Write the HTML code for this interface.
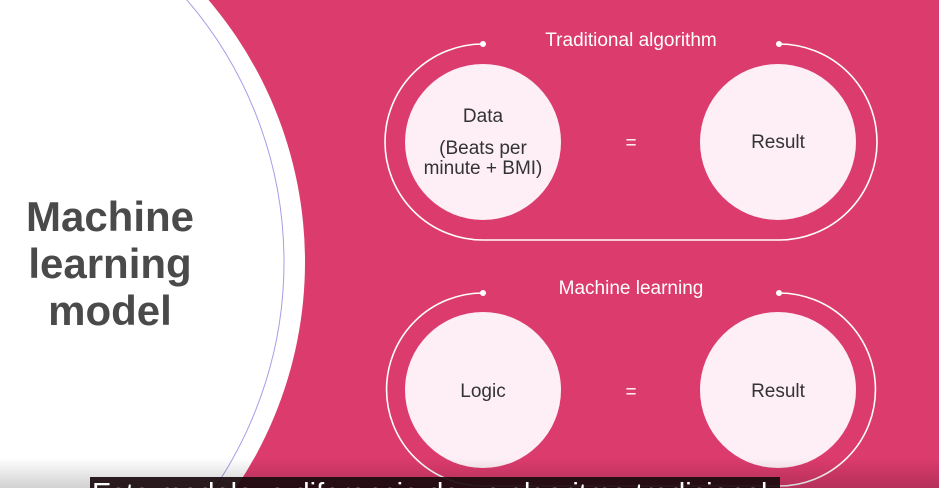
<!DOCTYPE html>
<html><head><meta charset="utf-8"><style>
html,body{margin:0;padding:0;width:939px;height:488px;overflow:hidden;background:#dc3b6e;position:relative}
svg{display:block}
text{font-family:"Liberation Sans",sans-serif}
#sub{position:absolute;left:90px;top:477px;width:690px;height:11px;overflow:hidden;background:rgba(26,10,14,0.92)}
#sub span{position:absolute;left:2px;top:3px;font:29px/1 "Liberation Sans",sans-serif;color:#fff;white-space:nowrap}
</style></head><body>
<svg width="939" height="488" viewBox="0 0 939 488" xmlns="http://www.w3.org/2000/svg">
<defs>
<linearGradient id="fade" x1="0" y1="0" x2="0" y2="1">
<stop offset="0" stop-color="#000" stop-opacity="0"/>
<stop offset="1" stop-color="#000" stop-opacity="0.18"/>
</linearGradient>
</defs>
<rect width="939" height="488" fill="#dc3b6e"/>
<circle cx="-99" cy="262" r="404" fill="#fff"/>
<circle cx="-118" cy="262" r="402" fill="none" stroke="#a99be8" stroke-width="1"/>
<text x="110" y="231" text-anchor="middle" font-size="42" font-weight="bold" fill="#4a4a4a">Machine</text>
<text x="110" y="278" text-anchor="middle" font-size="42" font-weight="bold" fill="#4a4a4a">learning</text>
<text x="110" y="325" text-anchor="middle" font-size="42" font-weight="bold" fill="#4a4a4a">model</text>

<text x="631" y="46" text-anchor="middle" font-size="19" fill="#fff">Traditional algorithm</text>
<path d="M483 44 A98 98 0 0 0 483 240 L779 240 A98 98 0 0 0 779 44" fill="none" stroke="#fff" stroke-width="1.6"/>
<circle cx="483" cy="44" r="3" fill="#fff"/><circle cx="779" cy="44" r="3" fill="#fff"/>
<circle cx="483" cy="142" r="78" fill="#fdeff5"/>
<circle cx="778" cy="142" r="78" fill="#fdeff5"/>
<text x="483" y="122" text-anchor="middle" font-size="19" fill="#333">Data</text>
<text x="483" y="154" text-anchor="middle" font-size="19" fill="#333">(Beats per</text>
<text x="483" y="174" text-anchor="middle" font-size="19" fill="#333">minute + BMI)</text>
<text x="778" y="148" text-anchor="middle" font-size="19" fill="#333">Result</text>
<text x="631" y="149" text-anchor="middle" font-size="19" fill="#fff">=</text>

<text x="631" y="294" text-anchor="middle" font-size="19" fill="#fff">Machine learning</text>
<path d="M483 293 A96.5 96.5 0 0 0 483 486 L779 486 A96.5 96.5 0 0 0 779 293" fill="none" stroke="#fff" stroke-width="1.6"/>
<circle cx="483" cy="293" r="3" fill="#fff"/><circle cx="779" cy="293" r="3" fill="#fff"/>
<circle cx="483" cy="390" r="78" fill="#fdeff5"/>
<circle cx="778" cy="390" r="78" fill="#fdeff5"/>
<text x="483" y="397" text-anchor="middle" font-size="19" fill="#333">Logic</text>
<text x="778" y="397" text-anchor="middle" font-size="19" fill="#333">Result</text>
<text x="631" y="398" text-anchor="middle" font-size="19" fill="#fff">=</text>

<rect x="0" y="458" width="939" height="30" fill="url(#fade)"/>
</svg>
<div id="sub"><span>Esta modelo, a diferencia de un algoritmo tradicional</span></div>
</body></html>
